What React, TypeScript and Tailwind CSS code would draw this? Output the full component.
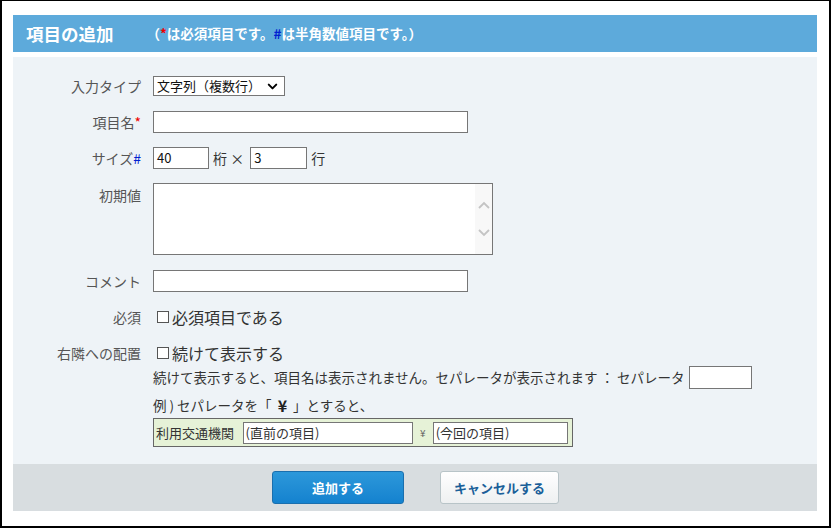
import { ChevronDown } from "lucide-react";

const font = { fontFamily: '"Noto Sans CJK JP", "Noto Sans", sans-serif' };

function Label({ children, top }: { children: React.ReactNode; top?: boolean }) {
    return (
        <div
            className={`w-[128px] shrink-0 text-right text-[14px] text-[#555] mr-[12px] ${
                top ? "self-start pt-[2px]" : ""
            }`}
        >
            {children}
        </div>
    );
}

function Box() {
    return <span className="inline-block w-[12px] h-[12px] border border-[#555] bg-white mr-[3px]" />;
}

export default function App() {
    return (
        <div
            className="w-[831px] h-[528px] bg-white border-l-2 border-t border-r-2 border-b-2 border-black pl-[11px] pt-[14px]"
            style={font}
        >
            <div className="w-[804px]">
                <div className="h-[37px] bg-[#5daadb] flex items-center pl-[13px] text-white font-bold">
                    <span className="text-[17.5px] leading-none">項目の追加</span>
                    <span className="text-[13.5px] leading-none ml-[33px]">
                        （<span className="text-[#e00]">*</span>は必須項目です。
                        <span className="text-[#0020d0]">#</span>は半角数値項目です。）
                    </span>
                </div>

                <div className="mt-[5px] h-[407px] bg-[#eef3f7] pt-[19px] flex flex-col">
                    <div className="flex items-center h-[20px]">
                        <Label>入力タイプ</Label>
                        <div className="w-[132px] h-[20px] border border-[#767676] bg-white flex items-center justify-between pl-[3px] pr-[4px] text-[13px] text-[#111]">
                            <span>文字列（複数行）</span>
                            <ChevronDown size={15} strokeWidth={3.2} className="text-black" />
                        </div>
                    </div>

                    <div className="flex items-center h-[22px] mt-[15px]">
                        <Label>
                            項目名<span className="text-[#e00]">*</span>
                        </Label>
                        <div className="w-[315px] h-[22px] border border-[#767676] bg-white" />
                    </div>

                    <div className="flex items-center h-[22px] mt-[14px] text-[14px] text-[#333]">
                        <Label>
                            サイズ<span className="text-[#0020d0]">#</span>
                        </Label>
                        <div className="w-[56px] h-[22px] border border-[#767676] bg-white text-[13px] pl-[3px] flex items-center text-[#111]">
                            40
                        </div>
                        <span className="ml-[4px]">桁 ×</span>
                        <div className="ml-[6px] w-[57px] h-[22px] border border-[#767676] bg-white text-[13px] pl-[3px] flex items-center text-[#111]">
                            3
                        </div>
                        <span className="ml-[4px]">行</span>
                    </div>

                    <div className="flex h-[72px] mt-[14px]">
                        <Label top>初期値</Label>
                        <div className="w-[340px] h-[72px] border border-[#767676] bg-white flex justify-end">
                            <div className="w-[17px] h-full bg-[#f8f8f8] flex flex-col items-center justify-center gap-[20px]">
                                <svg width="12" height="8" viewBox="0 0 12 8">
                                    <path d="M1 7 L6 2 L11 7" fill="none" stroke="#c4c4c4" strokeWidth="1.8" />
                                </svg>
                                <svg width="12" height="8" viewBox="0 0 12 8">
                                    <path d="M1 1 L6 6 L11 1" fill="none" stroke="#c4c4c4" strokeWidth="1.8" />
                                </svg>
                            </div>
                        </div>
                    </div>

                    <div className="flex items-center h-[22px] mt-[15px]">
                        <Label>コメント</Label>
                        <div className="w-[315px] h-[22px] border border-[#767676] bg-white" />
                    </div>

                    <div className="flex items-center h-[22px] mt-[14px]">
                        <Label>必須</Label>
                        <div className="flex items-center pl-[4px] text-[16px] text-[#333]">
                            <Box />
                            必須項目である
                        </div>
                    </div>

                    <div className="flex items-center h-[22px] mt-[14px]">
                        <Label>右隣への配置</Label>
                        <div className="flex items-center pl-[4px] text-[16px] text-[#333]">
                            <Box />
                            続けて表示する
                        </div>
                    </div>

                    <div className="flex items-center h-[23px] mt-[2px] pl-[140px] text-[13.5px] text-[#333]">
                        <span>続けて表示すると、項目名は表示されません。セパレータが表示されます ： セパレータ</span>
                        <div className="ml-[4px] w-[63px] h-[23px] border border-[#767676] bg-white" />
                    </div>

                    <div className="flex items-center h-[20px] mt-[6px] pl-[140px] text-[13.5px] text-[#333]">
                        例 ) セパレータを「
                        <span className="font-bold text-[16px] text-[#222] mx-[6px]">¥</span>」とすると、
                    </div>

                    <div className="ml-[140px] mt-[3px] w-[420px] h-[29px] border border-[#666] bg-[#e6f2d7] flex items-center pl-[2px] pr-[4px] text-[13px] text-[#333]">
                        <span className="w-[87px]">利用交通機関</span>
                        <div className="w-[171px] h-[22px] border border-[#767676] bg-white text-[13px] flex items-center pl-[2px]">
                            (直前の項目)
                        </div>
                        <span className="w-[20px] text-center text-[10px] text-[#666]">¥</span>
                        <div className="w-[136px] h-[22px] border border-[#767676] bg-white text-[13px] flex items-center pl-[2px]">
                            (今回の項目)
                        </div>
                    </div>
                </div>

                <div className="h-[47px] bg-[#d8dde0] flex items-center justify-center gap-[36px] pl-[1px]">
                    <button className="w-[132px] h-[33px] rounded-[3px] border border-[#1a6fae] bg-gradient-to-b from-[#2c98da] to-[#1482cf] text-white font-bold text-[13px]">
                        追加する
                    </button>
                    <button className="w-[119px] h-[33px] rounded-[3px] border border-[#b8c4c8] bg-gradient-to-b from-white to-[#eef0f1] text-[#1a5f99] font-bold text-[13px]">
                        キャンセルする
                    </button>
                </div>
            </div>
        </div>
    );
}
